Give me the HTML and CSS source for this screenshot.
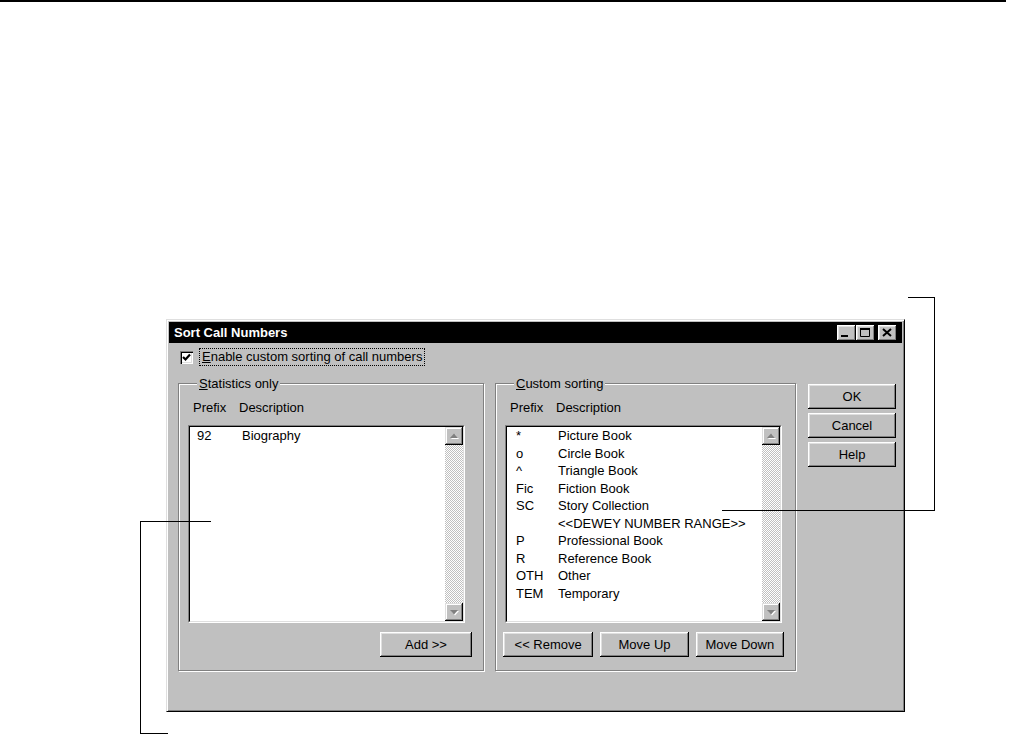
FILE: index.html
```html
<!DOCTYPE html>
<html lang="en">
<head>
<meta charset="UTF-8" />
<title>Sort Call Numbers</title>
<link rel="stylesheet" href="styles.css">
</head>
<body>
  <div class="top-rule"></div>

  <div class="dialog">
    <div class="titlebar">
      <span class="title">Sort Call Numbers</span>
      <div class="title-buttons">
        <button class="tb-btn" aria-label="Minimize">
          <svg width="19" height="16" viewBox="0 0 19 16"><rect x="4" y="10" width="7" height="2" fill="#000"/></svg>
        </button>
        <button class="tb-btn" aria-label="Maximize">
          <svg width="19" height="16" viewBox="0 0 19 16"><path d="M4.5 3.5h9v8h-9z" fill="none" stroke="#000"/><rect x="4" y="3" width="10" height="2" fill="#000"/></svg>
        </button>
        <button class="tb-btn tb-close" aria-label="Close">
          <svg width="19" height="16" viewBox="0 0 19 16"><path d="M5 4l8 7M13 4l-8 7" stroke="#000" stroke-width="2"/></svg>
        </button>
      </div>
    </div>

    <div class="check-row">
      <span class="checkbox">
        <svg width="13" height="13" viewBox="0 0 13 13"><path d="M3 6l2.5 2.5L10 3.5" fill="none" stroke="#000" stroke-width="2.2"/></svg>
      </span>
      <span class="check-label"><u>E</u>nable custom sorting of call numbers</span>
    </div>

    <div class="main">
      <fieldset class="group group-stats">
        <legend><u>S</u>tatistics only</legend>
        <div class="list-head"><span class="col-prefix">Prefix</span><span>Description</span></div>
        <div class="listbox">
          <div class="listbox-inner">
            <ul class="list-items">
              <li><span class="col-prefix">92</span><span>Biography</span></li>
            </ul>
            <div class="scrollbar">
              <div class="sb-btn">
                <svg width="18" height="18" viewBox="0 0 18 18"><path d="M5 11h8l-4-4.5z" fill="#fff" transform="translate(1 1)"/><path d="M5 11h8l-4-4.5z" fill="#808080"/></svg>
              </div>
              <div class="sb-track"></div>
              <div class="sb-btn">
                <svg width="18" height="18" viewBox="0 0 18 18"><path d="M5 7h8l-4 4.5z" fill="#fff" transform="translate(1 1)"/><path d="M5 7h8l-4 4.5z" fill="#808080"/></svg>
              </div>
            </div>
          </div>
        </div>
        <div class="group-actions">
          <button class="btn btn-add">Add &gt;&gt;</button>
        </div>
      </fieldset>

      <fieldset class="group group-custom">
        <legend><u>C</u>ustom sorting</legend>
        <div class="list-head"><span class="col-prefix">Prefix</span><span>Description</span></div>
        <div class="listbox">
          <div class="listbox-inner">
            <ul class="list-items">
              <li><span class="col-prefix">*</span><span>Picture Book</span></li>
              <li><span class="col-prefix">o</span><span>Circle Book</span></li>
              <li><span class="col-prefix">^</span><span>Triangle Book</span></li>
              <li><span class="col-prefix">Fic</span><span>Fiction Book</span></li>
              <li><span class="col-prefix">SC</span><span>Story Collection</span></li>
              <li><span class="col-prefix"></span><span>&lt;&lt;DEWEY NUMBER RANGE&gt;&gt;</span></li>
              <li><span class="col-prefix">P</span><span>Professional Book</span></li>
              <li><span class="col-prefix">R</span><span>Reference Book</span></li>
              <li><span class="col-prefix">OTH</span><span>Other</span></li>
              <li><span class="col-prefix">TEM</span><span>Temporary</span></li>
            </ul>
            <div class="scrollbar">
              <div class="sb-btn">
                <svg width="18" height="18" viewBox="0 0 18 18"><path d="M5 11h8l-4-4.5z" fill="#fff" transform="translate(1 1)"/><path d="M5 11h8l-4-4.5z" fill="#808080"/></svg>
              </div>
              <div class="sb-track"></div>
              <div class="sb-btn">
                <svg width="18" height="18" viewBox="0 0 18 18"><path d="M5 7h8l-4 4.5z" fill="#fff" transform="translate(1 1)"/><path d="M5 7h8l-4 4.5z" fill="#808080"/></svg>
              </div>
            </div>
          </div>
        </div>
        <div class="group-actions custom-actions">
          <button class="btn btn-remove">&lt;&lt; Remove</button>
          <button class="btn btn-move">Move Up</button>
          <button class="btn btn-move">Move Down</button>
        </div>
      </fieldset>

      <div class="side-buttons">
        <button class="btn btn-side">OK</button>
        <button class="btn btn-side">Cancel</button>
        <button class="btn btn-side">Help</button>
      </div>
    </div>
  </div>

  <!-- callout lines -->
  <div class="callout callout-right"></div>
  <div class="callout callout-right-arm"></div>
  <div class="callout callout-left"></div>
  <div class="callout callout-left-arm"></div>
</body>
</html>
```

FILE: styles.css
```css
body {
  margin: 0;
  background: #fff;
  color: #000;
  font-family: "Liberation Sans", Arial, sans-serif;
  font-size: 13px;
  position: relative;
  height: 735px;
  overflow: hidden;
}
.top-rule {
  width: 1006px;
  height: 2px;
  background: #000;
}

/* window */
.dialog {
  box-sizing: border-box;
  width: 739px;
  height: 393px;
  margin: 317px 0 0 166px;
  padding: 2px;
  background: #c0c0c0;
  border: 1px solid;
  border-color: #dfdfdf #000 #000 #dfdfdf;
  box-shadow: inset 1px 1px 0 #fff, inset -1px -1px 0 #808080;
}
.titlebar {
  height: 21px;
  background: #000;
  display: flex;
  align-items: center;
  justify-content: space-between;
  padding: 0 5px 0 5px;
}
.title {
  color: #fff;
  font-weight: bold;
  font-size: 13px;
}
.title-buttons {
  display: flex;
}
.tb-btn {
  width: 19px;
  height: 16px;
  padding: 0;
  border: none;
  background: #c0c0c0;
  display: flex;
  box-shadow: inset -1px -1px 0 #000, inset 1px 1px 0 #fff, inset -2px -2px 0 #808080, inset 2px 2px 0 #dfdfdf;
}
.tb-close {
  margin-left: 3px;
}

/* checkbox row */
.check-row {
  display: flex;
  align-items: center;
  gap: 6px;
  height: 18px;
  margin-top: 5px;
  padding-left: 11px;
}
.checkbox {
  width: 13px;
  height: 13px;
  background: #fff;
  display: flex;
  box-shadow: inset 1px 1px 0 #808080, inset 2px 2px 0 #000, inset -1px -1px 0 #fff, inset -2px -2px 0 #dfdfdf;
}
.check-label {
  border: 1px dotted #000;
  padding: 0 2px;
  line-height: 16px;
}

/* main area */
.main {
  display: flex;
  align-items: flex-start;
  margin-top: 10px;
  padding-left: 9px;
}
.group {
  box-sizing: border-box;
  margin: 0;
  min-width: 0;
  padding: 9px 0 13px 9px;
  border: 1px solid #808080;
  box-shadow: 1px 1px 0 #fff, inset 1px 1px 0 #fff;
}
.group legend {
  margin-left: 9px;
  padding: 0 2px;
  line-height: 15px;
  background: #c0c0c0;
}
.group-stats {
  width: 306px;
}
.group-custom {
  width: 301px;
  margin-left: 11px;
}
.list-head {
  display: flex;
  padding-left: 5px;
  line-height: 15px;
}
.list-head .col-prefix {
  width: 46px;
}

.listbox {
  box-sizing: border-box;
  width: 277px;
  height: 198px;
  margin-top: 10px;
  border: 1px solid;
  border-color: #808080 #fff #fff #808080;
}
.listbox-inner {
  height: 100%;
  box-sizing: border-box;
  display: flex;
  background: #fff;
  border: 1px solid;
  border-color: #000 #dfdfdf #dfdfdf #000;
}
.list-items {
  flex: 1;
  margin: 0;
  padding: 0 0 0 7px;
  list-style: none;
}
.list-items li {
  display: flex;
  line-height: 17.5px;
}
.list-items .col-prefix {
  width: 45px;
}
.group-custom .list-items {
  padding-left: 9px;
}
.group-custom .list-items .col-prefix {
  width: 42px;
}

.scrollbar {
  width: 18px;
  display: flex;
  flex-direction: column;
}
.sb-btn {
  height: 18px;
  display: flex;
  background: #c0c0c0;
  box-shadow: inset -1px -1px 0 #000, inset 1px 1px 0 #dfdfdf, inset -2px -2px 0 #808080, inset 2px 2px 0 #fff;
}
.sb-track {
  flex: 1;
  background: repeating-conic-gradient(#fff 0 25%, #c0c0c0 0 50%);
  background-size: 2px 2px;
}

/* buttons */
.btn {
  height: 25px;
  padding: 0;
  border: none;
  background: #c0c0c0;
  color: #000;
  font-family: "Liberation Sans", Arial, sans-serif;
  font-size: 13px;
  box-shadow: inset -1px -1px 0 #000, inset 1px 1px 0 #fff, inset -2px -2px 0 #808080, inset 2px 2px 0 #dfdfdf;
}
.group-actions {
  display: flex;
  justify-content: flex-end;
  margin-top: 9px;
  padding-right: 11px;
}
.btn-add {
  width: 92px;
}
.custom-actions {
  justify-content: flex-start;
  gap: 7px;
  margin-left: -2px;
}
.btn-remove {
  width: 91px;
}
.btn-move {
  width: 89px;
}
.side-buttons {
  display: flex;
  flex-direction: column;
  gap: 4px;
  margin: 8px 0 0 12px;
}
.btn-side {
  width: 88px;
}

/* annotation lines */
.callout {
  position: absolute;
  box-sizing: border-box;
  border: 0 solid #000;
}
.callout-right {
  left: 908px;
  top: 297px;
  width: 27px;
  height: 214px;
  border-top-width: 1px;
  border-right-width: 1px;
}
.callout-right-arm {
  left: 722px;
  top: 510px;
  width: 213px;
  border-top-width: 1px;
}
.callout-left {
  left: 140px;
  top: 521px;
  width: 71px;
  border-top-width: 1px;
}
.callout-left-arm {
  left: 140px;
  top: 521px;
  width: 28px;
  height: 213px;
  border-left-width: 1px;
  border-bottom-width: 1px;
}
```
